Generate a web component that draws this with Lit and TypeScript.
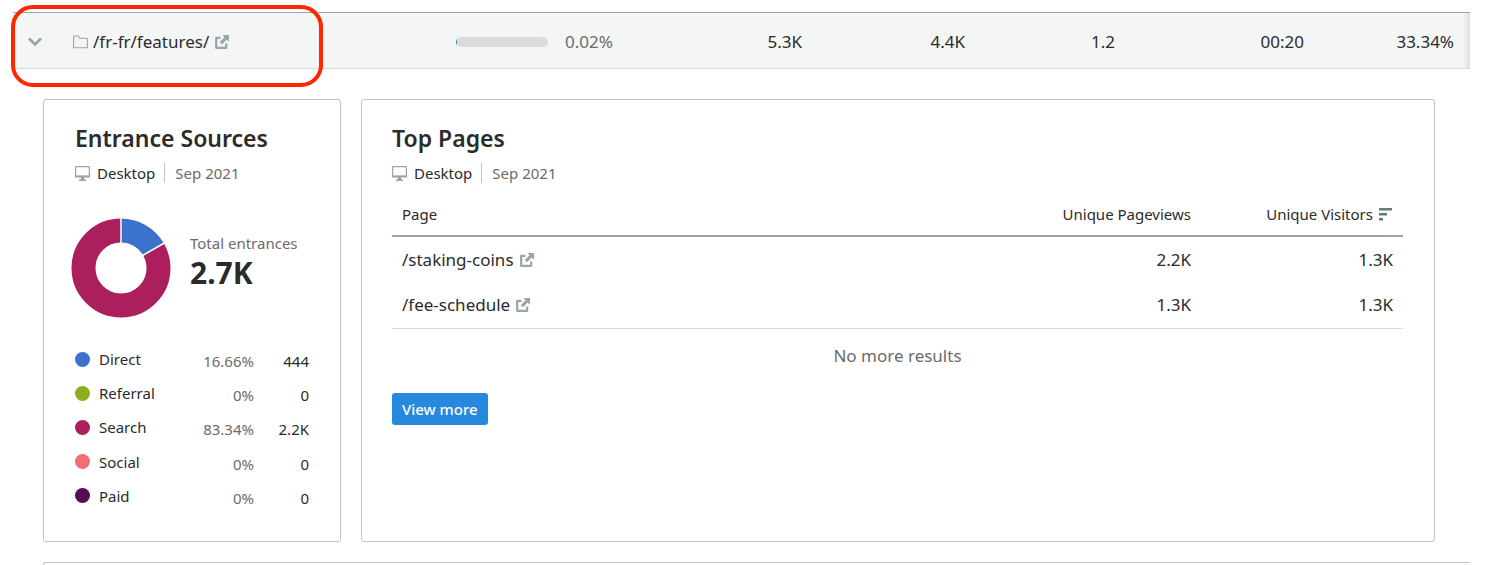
import { LitElement, html, css, svg } from "lit";
import { customElement } from "lit/decorators.js";
import { styleMap } from "lit/directives/style-map.js";

const sources = [
  { name: "Direct", color: "#3b73cc", share: "16.66%", value: "444" },
  { name: "Referral", color: "#8fae1f", share: "0%", value: "0" },
  { name: "Search", color: "#ab1f5c", share: "83.34%", value: "2.2K" },
  { name: "Social", color: "#f46d70", share: "0%", value: "0" },
  { name: "Paid", color: "#570b52", share: "0%", value: "0" },
];

const pages = [
  { path: "/staking-coins", views: "2.2K", visitors: "1.3K" },
  { path: "/fee-schedule", views: "1.3K", visitors: "1.3K" },
];

const externalIcon = html`<svg class="icon external" width="14" height="14" viewBox="0 0 14 14" aria-hidden="true">
  <path d="M5.5 2.8H1.2V12.8H11.2V8.5" fill="none" stroke="currentColor" stroke-width="2.2" stroke-linejoin="round" />
  <path d="M7.2 0H14V6.8L11.7 4.5L7 9.2L4.8 7L9.5 2.3Z" fill="currentColor" />
</svg>`;

const desktopIcon = html`<svg class="icon" width="15" height="15" viewBox="0 0 15 15" aria-hidden="true">
  <rect x="0.6" y="0.6" width="13.8" height="9.8" rx="0.8" fill="none" stroke="currentColor" stroke-width="1.2" />
  <path d="M0 9.4H15V11.4H0ZM5.8 11H9.2V13.4H11V15H4V13.4H5.8Z" fill="currentColor" />
</svg>`;

@customElement("app-root")
export class AppRoot extends LitElement {
  static styles = css`
    :host {
      display: flex;
      flex-direction: column;
      box-sizing: border-box;
      min-height: 100vh;
      padding: 12px 22px 0 13px;
      background: #fff;
      color: #2b2b2b;
      font: 15px/20px "Noto Sans", sans-serif;
    }
    *, *::before, *::after { box-sizing: border-box; }
    table { border-collapse: collapse; width: 100%; table-layout: fixed; }
    th, td { padding: 0; font-weight: 400; text-align: left; }
    a { color: inherit; text-decoration: none; }
    button { font: inherit; color: inherit; border: 0; background: none; padding: 0; cursor: pointer; }
    .icon { display: block; flex: none; color: #97a5a9; }
    .muted { color: #6b6b6b; }
    .num { text-align: right; }

    .row-wrap { position: relative; }
    .folder-row {
      border-top: 1px solid #98a9ad;
      border-bottom: 1px solid #d2dbde;
      background: linear-gradient(to left, #dcdddd, #f4f6f6 7px);
      font-size: 17px;
      line-height: 24px;
    }
    .folder-row th, .folder-row td { height: 56px; padding: 2px 16px 0 0; }
    .folder { display: flex; align-items: center; padding-left: 15px; }
    .toggle { margin-right: 31px; }
    .folder-icon { margin-right: 5px; }
    .link { display: inline-flex; align-items: center; gap: 6px; }
    .traffic { display: flex; align-items: center; gap: 17px; }
    .bar { width: 92px; height: 10px; border-radius: 5px; background: #dadcdb; overflow: hidden; }
    .bar-fill { height: 100%; min-width: 1px; background: #2789de; }
    .c-bar { width: 199px; }
    .c-a { width: 163px; }
    .c-b { width: 150px; }
    .c-c { width: 189px; }
    .highlight {
      position: absolute;
      left: -2px;
      top: -7px;
      width: 312px;
      height: 82px;
      border: 4px solid #ff2600;
      border-radius: 22px;
      pointer-events: none;
    }

    .cards {
      display: grid;
      grid-template-columns: 298px 1fr;
      gap: 20px;
      padding: 30px 35px 20px 30px;
    }
    .card { border: 1px solid #c2c2c2; border-radius: 3px; padding: 22px 31px 28px; }
    .card-pages { padding-left: 30px; }
    h2 { margin: 0; font-size: 23px; line-height: 32px; font-weight: 600; }
    .meta { display: flex; align-items: center; margin-top: 9px; }
    .device { display: flex; align-items: center; gap: 7px; padding-right: 9px; border-right: 1px solid #c2c2c2; margin-right: 10px; }

    .summary { display: flex; gap: 19px; margin: 35px 0 0 -4px; }
    .donut { display: block; flex: none; }
    .total { padding-top: 15px; white-space: nowrap; }
    .total-value { font-size: 30px; line-height: 40px; font-weight: 700; }
    .legend { height: 171px; margin-top: 24px; }
    .legend .num { padding-top: 4px; }
    .legend-name { display: flex; align-items: center; gap: 9px; }
    .dot { width: 15px; height: 15px; border-radius: 50%; }
    .c-share { width: 80px; }
    .c-count { width: 55px; }

    .pages { margin-top: 9px; }
    .pages th { height: 44px; padding: 0 10px; }
    .pages td { height: 46px; padding: 0 10px; }
    .pages thead tr { border-bottom: 2px solid #97a5a5; }
    .pages tbody { font-size: 17px; line-height: 24px; border-bottom: 1px solid #dcdddd; }
    .c-stat { width: 202px; }
    .sort { display: inline-flex; align-items: center; gap: 6px; }
    .sort-icon { color: #667a80; }
    .empty { margin: 15px 0 25px; font-size: 17px; line-height: 24px; text-align: center; }
    .more { height: 32px; padding: 0 10px; border-radius: 3px; background: #2789de; color: #fff; font-weight: 500; }
    .next { flex: 1; margin-left: 30px; border: solid #c2c2c2; border-width: 1px 0 0 1px; border-top-left-radius: 3px; }
  `;

  private meta() {
    return html`<div class="meta">
      <span class="device">${desktopIcon}Desktop</span>
      <span class="muted">Sep 2021</span>
    </div>`;
  }

  private donut() {
    // Ring drawn clockwise from twelve o'clock; pathLength turns shares into percent.
    const slices = [
      { color: "#3b73cc", start: 0, size: 16.66 },
      { color: "#ab1f5c", start: 16.66, size: 83.34 },
    ];
    return html`<svg class="donut" width="100" height="100" viewBox="-50 -50 100 100" role="img" aria-label="Entrance sources">
      ${slices.map((s) => svg`<circle r="37.5" fill="none" stroke=${s.color} stroke-width="24" pathLength="100"
        stroke-dasharray="${s.size} ${100 - s.size}" stroke-dashoffset=${-s.start} transform="rotate(-90)" />`)}
      <path d="M0 -24V-50M20.8 -12L43.3 -25" stroke="#fff" stroke-width="1.5" />
    </svg>`;
  }

  render() {
    return html`
      <div class="row-wrap">
        <table class="folder-row">
          <colgroup>
            <col /><col class="c-bar" /><col class="c-a" /><col class="c-a" /><col class="c-b" /><col class="c-c" /><col class="c-b" />
          </colgroup>
          <tbody>
            <tr>
              <th scope="row">
                <div class="folder">
                  <button class="toggle" aria-label="Collapse" aria-expanded="true">
                    <svg class="icon" width="14" height="14" viewBox="0 0 14 14"><path d="M1 3.6L7 9.4L13 3.6" fill="none" stroke="currentColor" stroke-width="2.8" /></svg>
                  </button>
                  <svg class="icon folder-icon" width="15" height="14" viewBox="0 0 15 14" aria-hidden="true">
                    <path d="M0.6 1.8Q0.6 1 1.4 1H5.2L6.8 3.2H13.6Q14.4 3.2 14.4 4V12Q14.4 12.8 13.6 12.8H1.4Q0.6 12.8 0.6 12Z" fill="none" stroke="currentColor" stroke-width="1.1" />
                  </svg>
                  <a class="link" href="#">/fr-fr/features/${externalIcon}</a>
                </div>
              </th>
              <td>
                <div class="traffic">
                  <div class="bar" role="meter" aria-label="Traffic share" aria-valuenow="0.02"><div class="bar-fill" style=${styleMap({ width: "0.02%" })}></div></div>
                  <span class="muted">0.02%</span>
                </div>
              </td>
              <td class="num">5.3K</td>
              <td class="num">4.4K</td>
              <td class="num">1.2</td>
              <td class="num">00:20</td>
              <td class="num">33.34%</td>
            </tr>
          </tbody>
        </table>
        <div class="highlight"></div>
      </div>

      <div class="cards">
        <section class="card">
          <h2>Entrance Sources</h2>
          ${this.meta()}
          <div class="summary">
            ${this.donut()}
            <div class="total">
              <div class="muted">Total entrances</div>
              <div class="total-value">2.7K</div>
            </div>
          </div>
          <table class="legend">
            <colgroup><col /><col class="c-share" /><col class="c-count" /></colgroup>
            <tbody>
              ${sources.map((s) => html`<tr>
                <th scope="row"><span class="legend-name"><span class="dot" style=${styleMap({ background: s.color })}></span>${s.name}</span></th>
                <td class="num muted">${s.share}</td>
                <td class="num">${s.value}</td>
              </tr>`)}
            </tbody>
          </table>
        </section>

        <section class="card card-pages">
          <h2>Top Pages</h2>
          ${this.meta()}
          <table class="pages">
            <colgroup><col /><col class="c-stat" /><col class="c-stat" /></colgroup>
            <thead>
              <tr>
                <th scope="col">Page</th>
                <th scope="col" class="num">Unique Pageviews</th>
                <th scope="col" class="num" aria-sort="descending">
                  <button class="sort">Unique Visitors<svg class="icon sort-icon" width="14" height="14" viewBox="0 0 14 14" aria-hidden="true"><path d="M0 1H13V3.4H0ZM0 6H8V8.4H0ZM0 11H4V13.4H0Z" fill="currentColor" /></svg></button>
                </th>
              </tr>
            </thead>
            <tbody>
              ${pages.map((p) => html`<tr>
                <td><a class="link" href="#">${p.path}${externalIcon}</a></td>
                <td class="num">${p.views}</td>
                <td class="num">${p.visitors}</td>
              </tr>`)}
            </tbody>
          </table>
          <p class="empty muted">No more results</p>
          <button class="more">View more</button>
        </section>
      </div>
      <section class="next"></section>
    `;
  }
}
